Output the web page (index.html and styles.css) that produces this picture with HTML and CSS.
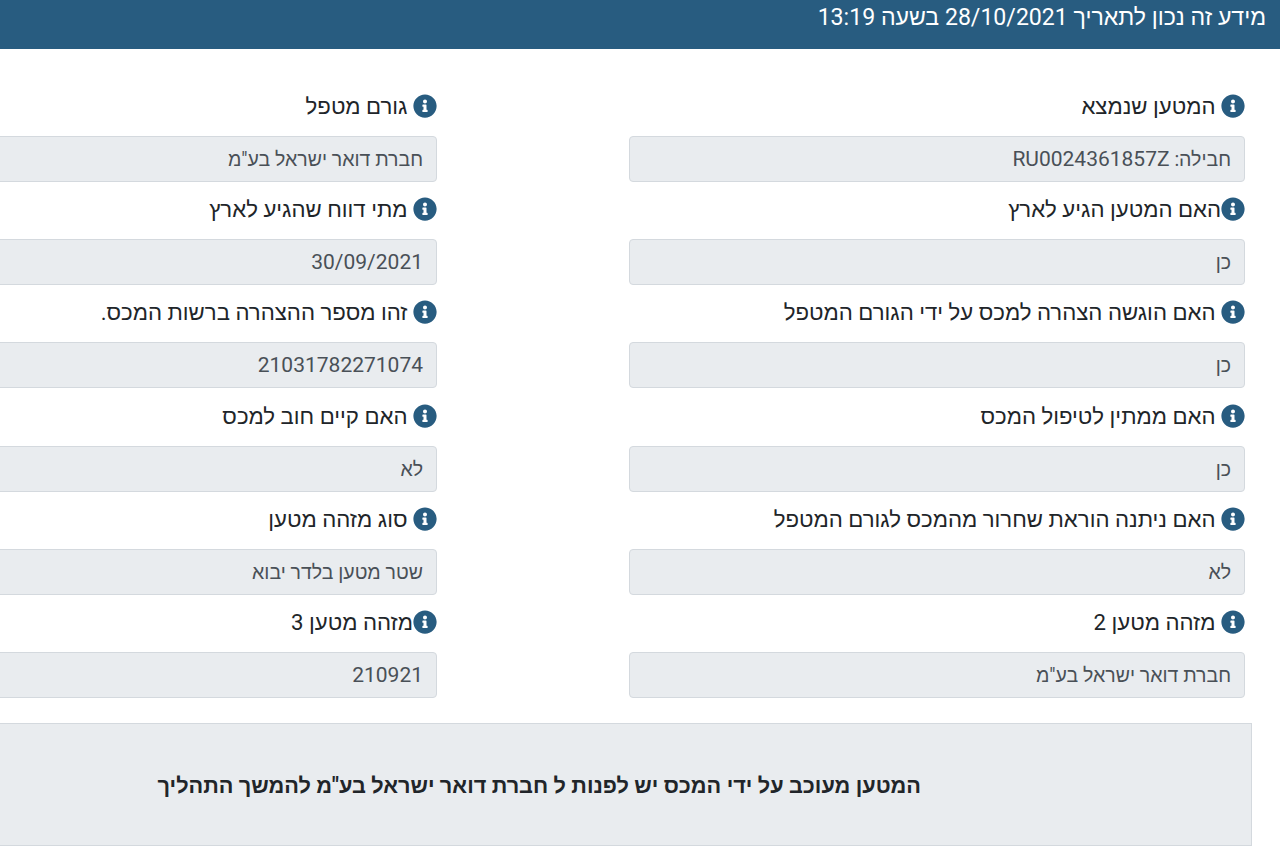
FILE: index.html
```html
<!DOCTYPE html>
<html lang="he" dir="rtl">
<head>
    <meta charset="utf-8">
    <title>מידע על מטען</title>
    <link rel="stylesheet" href="styles.css">
</head>
<body>

<svg class="icon-defs" width="0" height="0">
    <symbol id="info" viewBox="0 0 512 512">
        <path d="M256 8C119.043 8 8 119.083 8 256c0 136.997 111.043 248 248 248s248-111.003 248-248C504 119.083 392.957 8 256 8zm0 110c23.196 0 42 18.804 42 42s-18.804 42-42 42-42-18.804-42-42 18.804-42 42-42zm56 254c0 6.627-5.373 12-12 12h-88c-6.627 0-12-5.373-12-12v-24c0-6.627 5.373-12 12-12h12v-64h-12c-6.627 0-12-5.373-12-12v-24c0-6.627 5.373-12 12-12h64c6.627 0 12 5.373 12 12v100h12c6.627 0 12 5.373 12 12v24z"/>
    </symbol>
</svg>

<div class="topbar">מידע זה נכון לתאריך 28/10/2021 בשעה 13:19</div>

<div class="fields">
    <div class="field">
        <div class="label"><svg class="info"><use href="#info"/></svg> המטען שנמצא</div>
        <div class="value">חבילה: <span class="num">RU0024361857Z</span></div>
    </div>
    <div class="field">
        <div class="label"><svg class="info"><use href="#info"/></svg> גורם מטפל</div>
        <div class="value">חברת דואר ישראל בע"מ</div>
    </div>
    <div class="field">
        <div class="label"><svg class="info"><use href="#info"/></svg>האם המטען הגיע לארץ</div>
        <div class="value">כן</div>
    </div>
    <div class="field">
        <div class="label"><svg class="info"><use href="#info"/></svg> מתי דווח שהגיע לארץ</div>
        <div class="value"><span class="num">30/09/2021</span></div>
    </div>
    <div class="field">
        <div class="label"><svg class="info"><use href="#info"/></svg> האם הוגשה הצהרה למכס על ידי הגורם המטפל</div>
        <div class="value">כן</div>
    </div>
    <div class="field">
        <div class="label"><svg class="info"><use href="#info"/></svg> זהו מספר ההצהרה ברשות המכס.</div>
        <div class="value"><span class="num">21031782271074</span></div>
    </div>
    <div class="field">
        <div class="label"><svg class="info"><use href="#info"/></svg> האם ממתין לטיפול המכס</div>
        <div class="value">כן</div>
    </div>
    <div class="field">
        <div class="label"><svg class="info"><use href="#info"/></svg> האם קיים חוב למכס</div>
        <div class="value">לא</div>
    </div>
    <div class="field">
        <div class="label"><svg class="info"><use href="#info"/></svg> האם ניתנה הוראת שחרור מהמכס לגורם המטפל</div>
        <div class="value">לא</div>
    </div>
    <div class="field">
        <div class="label"><svg class="info"><use href="#info"/></svg> סוג מזהה מטען</div>
        <div class="value">שטר מטען בלדר יבוא</div>
    </div>
    <div class="field">
        <div class="label"><svg class="info"><use href="#info"/></svg> מזהה מטען 2</div>
        <div class="value">חברת דואר ישראל בע"מ</div>
    </div>
    <div class="field">
        <div class="label"><svg class="info"><use href="#info"/></svg>מזהה מטען 3</div>
        <div class="value"><span class="num">210921</span></div>
    </div>
</div>

<div class="notice">
    <p>המטען מעוכב על ידי המכס יש לפנות ל חברת דואר ישראל בע"מ להמשך התהליך</p>
</div>

</body>
</html>
```

FILE: styles.css
```css
html, body {
    height: 100%;
}

body {
    margin: 0;
    overflow: hidden;
    background: #fff;
    color: #212529;
    font-family: Roboto, "Liberation Sans", sans-serif;
    line-height: 1.5;
}

.icon-defs {
    display: block;
}

.topbar {
    height: 49px;
    box-sizing: border-box;
    padding: 2px 14px 0 0;
    background: #285c80;
    color: #fff;
    font-size: 23.1px;
    line-height: 32px;
}

.fields {
    display: grid;
    grid-template-columns: 616px 616px;
    column-gap: 192px;
    grid-auto-rows: 103.2px;
    padding: 45px 35px 0 0;
}

.label {
    height: 24px;
    margin-bottom: 18px;
    font-size: 22.2px;
    line-height: 24px;
    white-space: nowrap;
}

.info {
    width: 24px;
    height: 24px;
    vertical-align: top;
    fill: #285c80;
}

.value {
    height: 46px;
    box-sizing: border-box;
    padding: 0 13px;
    background: #e9ecef;
    border: 1px solid #d4d9de;
    border-radius: 4px;
    color: #495057;
    font-size: 19.5px;
    line-height: 45px;
}

.num {
    font-size: 21px;
}

.notice {
    display: flex;
    align-items: center;
    width: 1300px;
    height: 123px;
    box-sizing: border-box;
    margin: 10px 28px 0 0;
    padding: 3px 330px 0 0;
    background: #e9ecef;
    border: 1px solid #d4d9de;
    white-space: nowrap;
}

.notice p {
    margin: 0;
    font-size: 21.7px;
    font-weight: bold;
}
```
